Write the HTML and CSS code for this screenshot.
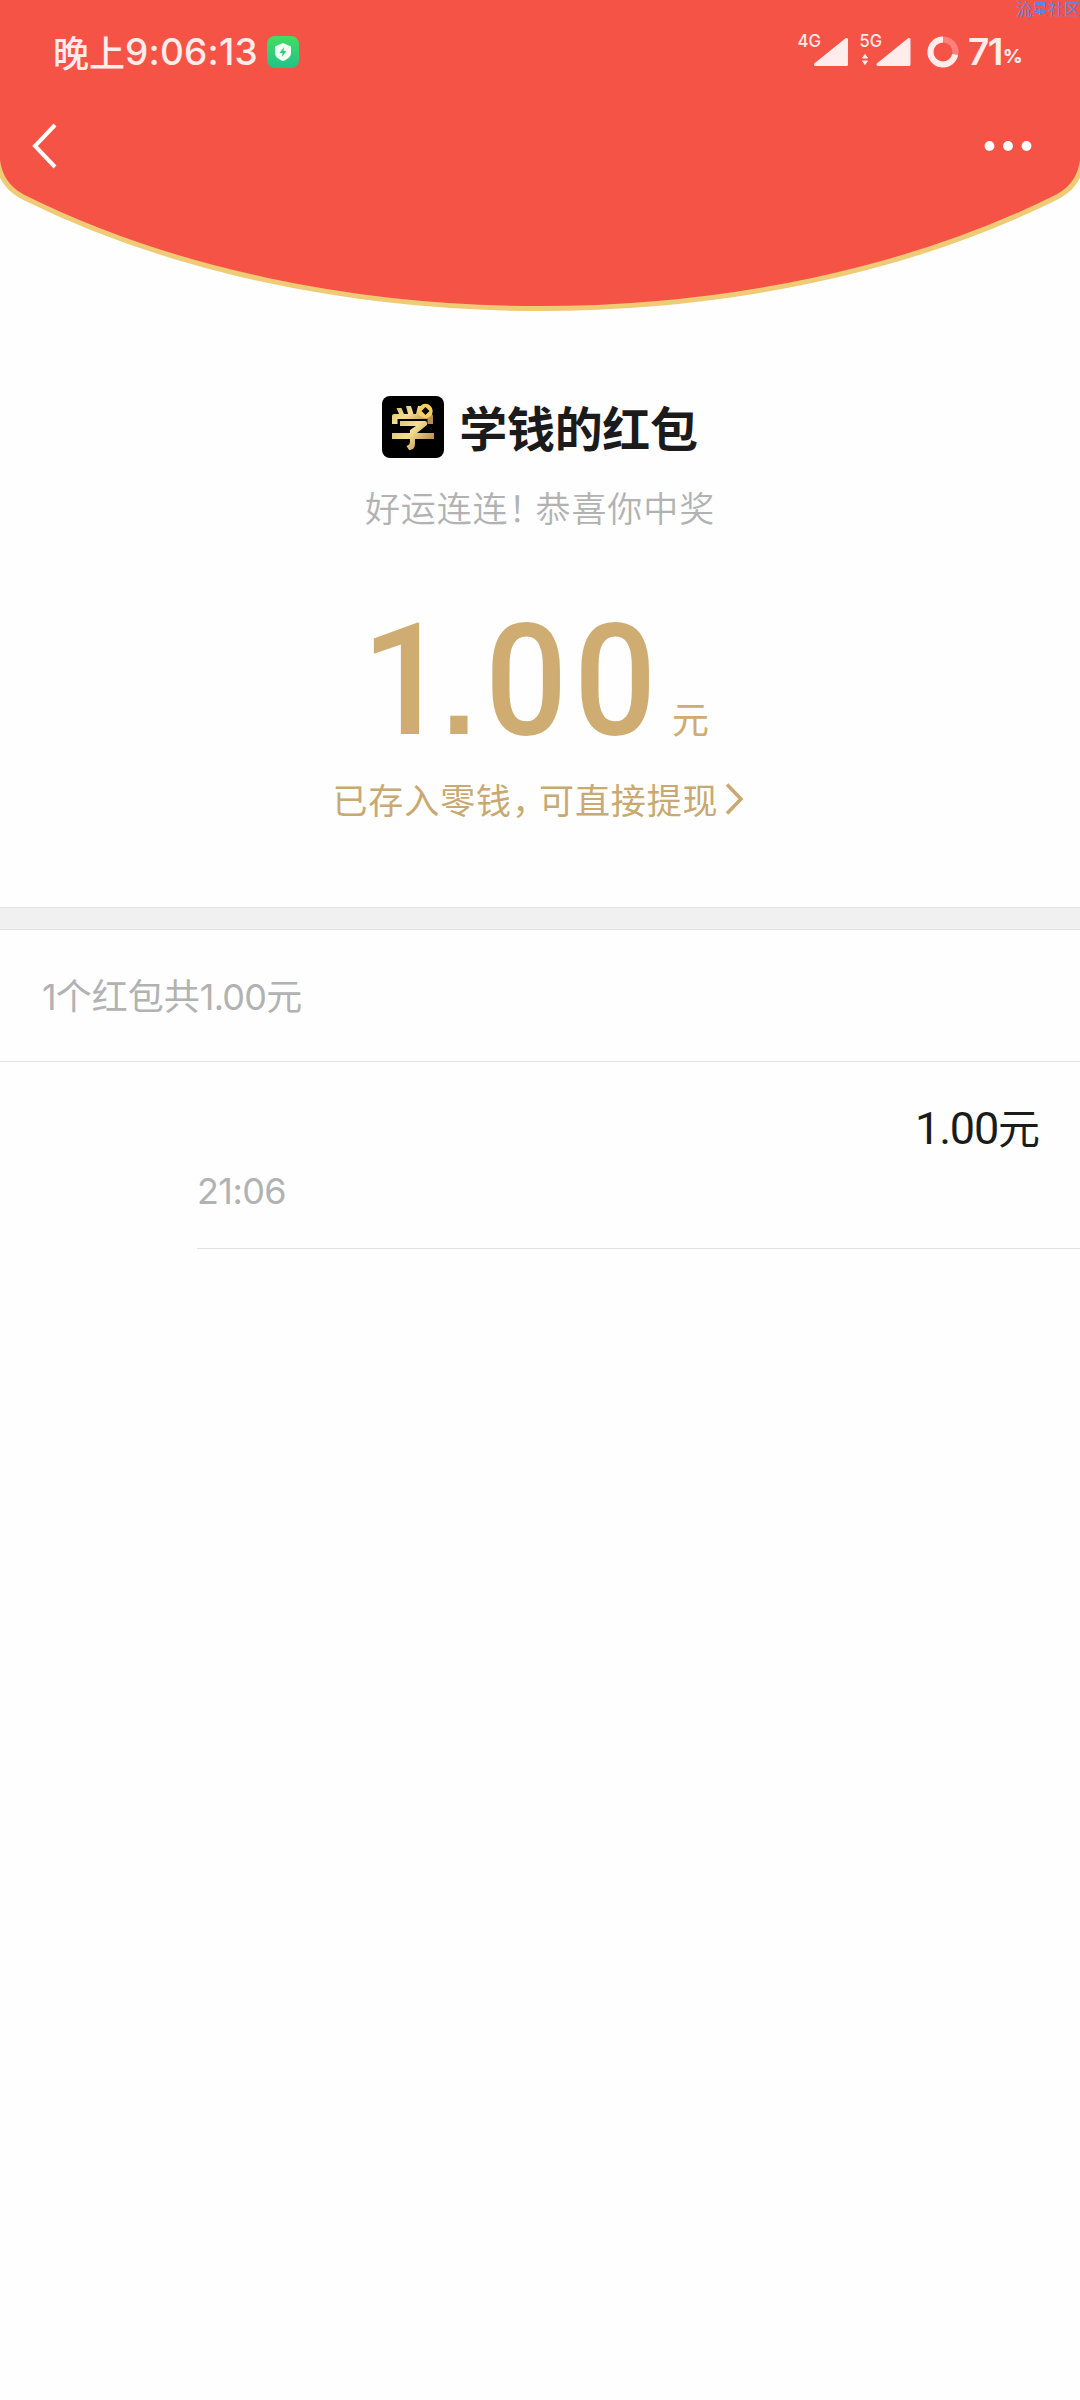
FILE: index.html
```html
<!DOCTYPE html>
<html lang="zh-CN">
<head>
<meta charset="utf-8">
<title>学钱的红包</title>
<link rel="stylesheet" href="styles.css">
</head>
<body>
<main class="screen">
  <header class="hero">
    <svg class="hero-bg" width="1080" height="320" viewBox="0 0 1080 320" aria-hidden="true">
      <path d="M-3 -10V155C-2 175 6 188 22 196.500C172 271.500 357 308.500 540 308.500S908 271.500 1058 196.500C1074 188 1082 175 1083 155V-10Z" fill="#f65347" stroke="#efcb76" stroke-width="5"/>
    </svg>
    <div class="watermark">流星社区</div>
    <div class="status">
      <div class="clock"><span class="period">晚上</span><span class="time">9:06:13</span></div>
      <svg class="guard" width="32" height="32" viewBox="0 0 32 32">
        <defs><linearGradient id="green" x1="0" y1="0" x2="0" y2="1"><stop stop-color="#42de61"/><stop offset="1" stop-color="#21c28a"/></linearGradient></defs>
        <rect width="32" height="32" rx="8" fill="url(#green)"/>
        <path d="M16 7L24 10.500V17C24 21 20 23.500 16 25C12 23.500 8 21 8 17V10.500Z" fill="#f4fff6"/>
        <path d="M17 11L12.500 17H15.500L15 21L19.500 15H16.500Z" fill="#2fcd76"/>
      </svg>
      <div class="indicators">
        <svg width="120" height="40" viewBox="0 0 120 40">
          <g fill="#ffeceb" stroke="#ffeceb" stroke-width="3" stroke-linejoin="round">
            <path d="M20.500 32.500L51.500 7.500V32.500Z"/>
            <path d="M83 32.500L114 7.500V32.500Z"/>
          </g>
          <path d="M70 22.500L72.500 26H67.500ZM70 32.500L67.500 29H72.500Z" fill="#ffeceb" stroke="#ffeceb" stroke-linejoin="round"/>
          <g class="net"><text x="2.500" y="15" textLength="23.500" lengthAdjust="spacingAndGlyphs">4G</text><text x="64.500" y="15" textLength="22.500" lengthAdjust="spacingAndGlyphs">5G</text></g>
        </svg>
        <svg class="ring" width="32" height="32" viewBox="0 0 32 32">
          <circle cx="16" cy="16" r="12.500" fill="none" stroke="#fb817a" stroke-width="6"/>
          <path d="M16 3.500A12.500 12.500 0 1 0 28.200 18.500" fill="none" stroke="#ffeceb" stroke-width="6"/>
        </svg>
        <span class="battery">71</span><span class="percent">%</span>
      </div>
    </div>
    <nav class="nav">
      <svg width="26" height="46" viewBox="0 0 26 46" aria-label="返回"><path d="M23 2L3 23L23 44" fill="none" stroke="#fff" stroke-width="4"/></svg>
      <svg width="48" height="12" viewBox="0 0 48 12" aria-label="更多" fill="#fff"><circle cx="5.500" cy="6" r="4.900"/><circle cx="24" cy="6" r="4.900"/><circle cx="42.500" cy="6" r="4.900"/></svg>
    </nav>
  </header>

  <section class="summary">
    <div class="sender">
      <svg width="62" height="62" viewBox="0 0 62 62" aria-hidden="true">
        <defs><linearGradient id="gold" x1="0" y1="0" x2="1" y2="0.600"><stop stop-color="#d9bd68"/><stop offset=".5" stop-color="#f4df91"/><stop offset="1" stop-color="#b88e4c"/></linearGradient></defs>
        <rect width="62" height="62" rx="8" fill="#000"/>
        <g fill="url(#gold)">
          <path d="M10 28V20Q10 18 12 18H17L14.500 12H19.500L22 18H26L24 10H29L31.500 18H34L36 10H41L39 18H49Q51 18 51 20V28H45.500V23H15.500V28Z"/>
          <path d="M18 25H43Q45 25 45 27V29L35 37H52V43H33V47C33 52 31 54 27 54L24.500 50C28 49 28 47 28 43H10V37H28V34L34 30H18Z"/>
        </g>
        <circle cx="43.500" cy="15" r="7.200" fill="#f9cf63"/>
        <path d="M43.500 11L47.500 15L43.500 19L39.500 15Z" fill="#090804"/>
      </svg>
      <h1>学钱的红包</h1>
    </div>
    <p class="wish">好运连连<span class="mark">！</span>恭喜你中奖</p>
    <div class="amount"><span class="one">1</span><span class="dot">.</span><span class="zeros">00</span><span class="unit">元</span></div>
    <div class="deposit"><span>已存入零钱<span class="mark">，</span>可直接提现</span>
      <svg width="20" height="34" viewBox="0 0 20 34"><path d="M3 2.500L17 17L3 31.500" fill="none" stroke="#c9a971" stroke-width="3.600"/></svg>
    </div>
  </section>

  <div class="divider"></div>
  <section class="records">
    <div class="total"><span class="n">1</span>个红包共<span class="n">1.00</span>元</div>
    <article class="record">
      <div class="money"><span class="value">1.00</span>元</div>
      <time>21:06</time>
    </article>
  </section>
</main>
</body>
</html>
```
FILE: styles.css
```css
* { box-sizing: border-box; }
body { margin: 0; background: #fefefe; font-family: "Noto Sans CJK SC", sans-serif; }
svg { display: block; flex: none; }
h1, p { margin: 0; }
.screen { width: 1080px; height: 2400px; overflow: hidden; background: #fefefe; display: flex; flex-direction: column; }

.hero { position: relative; height: 320px; flex: none; overflow: hidden; }
.hero-bg { position: absolute; inset: 0; }
.watermark { position: absolute; top: 0; right: 0; font-size: 16px; line-height: 16px; color: #5f86e4; white-space: nowrap; }
.status { position: relative; display: flex; align-items: center; height: 52px; margin-top: 26px; padding: 0 57px 0 53px; color: #ffeceb; }
.clock { display: flex; align-items: center; width: 206px; line-height: 52px; white-space: nowrap; }
.period { font-size: 36px; font-weight: 500; line-height: 50px; padding-bottom: 2px; }
.time { font-family: Inter, sans-serif; font-size: 37px; font-weight: 500; letter-spacing: .200px; }
.guard { margin-left: 8px; }
.indicators { display: flex; align-items: center; margin-left: auto; height: 52px; }
.net { fill: #ffeceb; font: 500 17px Inter, sans-serif; }
.ring { margin-left: 12px; }
.battery { width: 35px; font: 600 37px/52px Inter, sans-serif; letter-spacing: -1.500px; margin-left: 9px; }
.percent { width: 20px; font: 800 19px/52px Inter, sans-serif; padding-top: 9px; }
.nav { position: relative; display: flex; align-items: center; justify-content: space-between; height: 136px; padding: 0 48px 0 32px; }

.summary { height: 587px; flex: none; display: flex; flex-direction: column; align-items: center; padding-top: 76px; }
.sender { display: flex; align-items: center; gap: 15px; height: 62px; }
h1 { font-size: 48px; line-height: 62px; font-weight: 700; color: #1b1b1b; letter-spacing: -.300px; padding-bottom: 3px; }
.wish { margin-top: 22px; font-size: 35px; line-height: 54px; letter-spacing: .900px; color: #b2b2b2; font-weight: 350; }
.mark { letter-spacing: -8px; }
.amount { display: flex; align-items: baseline; width: 356px; height: 182px; margin-top: 56px; color: #cfac71; font: 500 155px/182px Roboto, sans-serif; }
.one { width: 80px; margin-left: -1px; letter-spacing: -10px; }
.dot { width: 43px; margin-left: 1px; font: 700 122px/182px "Liberation Sans", sans-serif; }
.zeros { width: 164px; letter-spacing: 7px; transform: scaleX(.935); transform-origin: left; white-space: nowrap; }
.unit { font: 400 37px/54px "Noto Sans CJK SC", sans-serif; margin-left: 23px; }
.deposit { display: flex; align-items: center; gap: 5px; margin-right: 4px; font-size: 35px; line-height: 54px; letter-spacing: .900px; color: #c9a971; }

.divider { height: 23px; flex: none; background: #f0f0f0; border: solid #e2e2e2; border-width: 1px 0; }
.total { height: 132px; padding-left: 42px; font-size: 36px; line-height: 129px; color: #b2b2b2; border-bottom: 1px solid #e2e2e2; }
.n { font-family: Inter, sans-serif; letter-spacing: -.800px; }
.record { height: 187px; margin-left: 197px; padding: 33px 40px 0 0; border-bottom: 1px solid #e2e2e2; }
.money { font-size: 42px; line-height: 62px; text-align: right; color: #1b1b1b; }
.value { font-family: Roboto, sans-serif; font-size: 45px; letter-spacing: -1.200px; }
time { display: block; font: 400 36px/62px Inter, sans-serif; letter-spacing: -.600px; color: #b2b2b2; }
```
